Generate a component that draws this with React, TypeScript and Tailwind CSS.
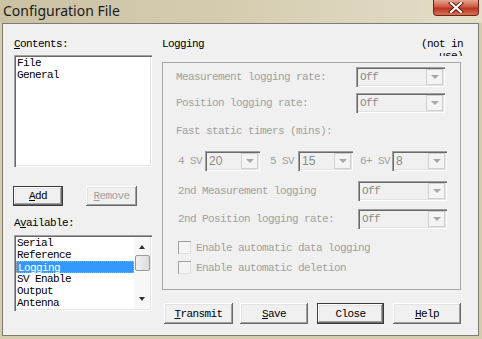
const mono =
  "font-['Liberation_Mono',monospace] text-[11px] leading-[12px] tracking-[-0.6px] whitespace-pre";

const sunken =
  "shadow-[inset_1px_1px_#a0a0a0,inset_2px_2px_#696969,inset_-1px_-1px_#ffffff,inset_-2px_-2px_#e3e3e3]";

const raised =
  "shadow-[inset_-1px_-1px_#696969,inset_1px_1px_#ffffff,inset_-2px_-2px_#a0a0a0,inset_2px_2px_#e3e3e3]";

function Btn({
  label,
  mn,
  w,
  def,
  disabled,
}: {
  label: string;
  mn?: number;
  w: string;
  def?: boolean;
  disabled?: boolean;
}) {
  const i = mn ?? -1;
  return (
    <div
      className={`${w} flex h-full items-center justify-center bg-[#f0f0f0] ${raised} ${
        def ? "border border-[#3c3c3c]" : ""
      } ${mono} ${disabled ? "text-[#a0a0a0]" : "text-black"}`}
    >
      {i >= 0 ? (
        <span>
          {label.slice(0, i)}
          <span className="underline underline-offset-[1px]">{label[i]}</span>
          {label.slice(i + 1)}
        </span>
      ) : (
        label
      )}
    </div>
  );
}

function Select({ value, w, sans }: { value: string; w: string; sans?: boolean }) {
  return (
    <div className={`${w} relative flex h-[20px] items-center bg-[#f0f0f0] pl-[4px] ${sunken}`}>
      <span
        className={
          sans
            ? "font-['Liberation_Sans',sans-serif] text-[12px] leading-[12px] text-[#8a8a8a]"
            : `${mono} text-[#8a8a8a]`
        }
      >
        {value}
      </span>
      <div className="ml-auto mr-[2px] flex h-[16px] w-[17px] items-center justify-center border border-[#d0d0d0] bg-[#f4f4f4]">
        <div className="h-0 w-0 border-x-[4px] border-t-[4px] border-x-transparent border-t-[#a8a8a8]" />
      </div>
    </div>
  );
}

function Check({ label }: { label: string }) {
  return (
    <div className="flex h-[13px] items-center pl-[15px]">
      <div className="h-[13px] w-[13px] bg-[#f4f4f4] shadow-[inset_1px_1px_#a0a0a0,inset_-1px_-1px_#e0e0e0]" />
      <span className={`${mono} ml-[5px] text-[#a0a0a0]`}>{label}</span>
    </div>
  );
}

function Row({ label, select }: { label: string; select: React.ReactNode }) {
  return (
    <div className="flex h-[20px] items-center">
      <span className={`${mono} w-[180px] text-[#a0a0a0]`}>{label}</span>
      {select}
    </div>
  );
}

export default function App() {
  const available = ["Serial", "Reference", "Logging", "SV Enable", "Output", "Antenna"];

  return (
    <div className="flex h-[339px] w-[482px] flex-col overflow-hidden bg-[#d5ccb0]">
      {/* Title bar */}
      <div className="flex h-[23px] shrink-0 items-start bg-[linear-gradient(90deg,#cbc2a4,#d6cdb1_50%,#e4dec9)]">
        <span className="ml-[3px] mt-[2px] font-['Noto_Sans',sans-serif] text-[14px] leading-[18px] text-[#1a1a1a]">
          Configuration File
        </span>
        <div className="ml-auto mr-[3px] flex h-[16px] w-[46px] items-center justify-center rounded-b-[4px] border border-t-0 border-[#6a2419] bg-[linear-gradient(#e6a590,#cf5a40_45%,#b9361f_55%,#d67456)]">
          <svg width="16" height="11" viewBox="0 0 16 11">
            <path
              d="M3 1 L13 10 M13 1 L3 10"
              stroke="#5a1a10"
              strokeWidth="4"
              strokeLinecap="square"
            />
            <path
              d="M3 1 L13 10 M13 1 L3 10"
              stroke="#ffffff"
              strokeWidth="2.2"
              strokeLinecap="square"
            />
          </svg>
        </div>
      </div>

      {/* Client area */}
      <div className="ml-[2px] flex h-[313px] w-[477px] border border-[#7d7b72] bg-[#f0f0f0]">
        {/* Left column */}
        <div className="ml-[11px] flex w-[139px] shrink-0 flex-col">
          <span className={`${mono} mt-[14px] h-[12px] text-black`}>
            <span className="underline underline-offset-[1px]">C</span>ontents:
          </span>
          <div className={`mt-[5px] h-[112px] w-[138px] bg-white pl-[3px] pt-[2px] ${sunken}`}>
            <div className={`${mono} text-black`}>File</div>
            <div className={`${mono} text-black`}>General</div>
          </div>
          <div className="-ml-px mt-[19px] flex h-[20px] gap-[23px]">
            <Btn label="Add" mn={0} w="w-[50px]" def />
            <Btn label="Remove" mn={0} w="w-[51px]" disabled />
          </div>
          <span className={`${mono} mt-[11px] h-[12px] text-black`}>
            A<span className="underline underline-offset-[1px]">v</span>ailable:
          </span>
          <div className={`mt-[6px] flex h-[76px] w-[138px] bg-white p-[2px] ${sunken}`}>
            <div className="flex-1 overflow-hidden">
              {available.map((a) => (
                <div
                  key={a}
                  className={`${mono} h-[12px] pl-[1px] ${
                    a === "Logging"
                      ? "border border-dotted border-[#f0a050] bg-[#3399ff] pl-0 leading-[10px] text-white"
                      : "text-black"
                  }`}
                >
                  {a}
                </div>
              ))}
            </div>
            <div className="flex w-[16px] flex-col items-center bg-[#f7f7f7]">
              <div className="mt-[8px] h-0 w-0 border-x-[3.5px] border-b-[4px] border-x-transparent border-b-[#333]" />
              <div className="mt-[6px] h-[16px] w-[15px] rounded-[2px] border border-[#9a9a9a] bg-[linear-gradient(90deg,#f2f2f2,#dcdcdc)]" />
              <div className="mt-auto mb-[8px] h-0 w-0 border-x-[3.5px] border-t-[4px] border-x-transparent border-t-[#333]" />
            </div>
          </div>
        </div>

        {/* Right column */}
        <div className="ml-[9px] flex w-[310px] shrink-0 flex-col">
          <div className="mt-[14px] flex h-[18px] items-start">
            <span className={`${mono} text-black`}>Logging</span>
            <div className="ml-[217px] h-[18px] w-[44px] shrink-0 overflow-hidden">
              <div className={`${mono} text-black`}>(not in</div>
              <div className={`${mono} text-black`}>{"   use)"}</div>
            </div>
          </div>

          <div className="mt-[6px] flex h-[228px] w-[299px] flex-col border border-[#a8a8a8]">
            <div className="ml-[13px] mt-[4px]">
              <Row label="Measurement logging rate:" select={<Select value="Off" w="w-[89px]" />} />
            </div>
            <div className="ml-[13px] mt-[6px]">
              <Row label="Position logging rate:" select={<Select value="Off" w="w-[89px]" />} />
            </div>
            <span className={`${mono} ml-[13px] mt-[12px] h-[12px] text-[#a0a0a0]`}>
              Fast static timers (mins):
            </span>
            <div className="ml-[15px] mt-[14px] flex h-[20px] items-center">
              <span className={`${mono} text-[#a0a0a0]`}>4 SV</span>
              <div className="ml-[3px]">
                <Select value="20" w="w-[55px]" sans />
              </div>
              <span className={`${mono} ml-[10px] text-[#a0a0a0]`}>5 SV</span>
              <div className="ml-[4px]">
                <Select value="15" w="w-[55px]" sans />
              </div>
              <span className={`${mono} ml-[7px] text-[#a0a0a0]`}>6+ SV</span>
              <div className="ml-[2px]">
                <Select value="8" w="w-[55px]" sans />
              </div>
            </div>
            <div className="ml-[15px] mt-[10px]">
              <Row label="2nd Measurement logging" select={<Select value="Off" w="w-[89px]" />} />
            </div>
            <div className="ml-[15px] mt-[8px]">
              <Row label="2nd Position logging rate:" select={<Select value="Off" w="w-[89px]" />} />
            </div>
            <div className="mt-[12px]">
              <Check label="Enable automatic data logging" />
            </div>
            <div className="mt-[7px]">
              <Check label="Enable automatic deletion" />
            </div>
          </div>

          <div className="ml-[2px] mt-[13px] flex h-[21px]">
            <Btn label="Transmit" mn={0} w="w-[69px]" />
            <div className="ml-[7px] h-full">
              <Btn label="Save" mn={0} w="w-[68px]" />
            </div>
            <div className="ml-[9px] h-full">
              <Btn label="Close" w="w-[67px]" def />
            </div>
            <div className="ml-[9px] h-full">
              <Btn label="Help" mn={0} w="w-[68px]" />
            </div>
          </div>
        </div>
      </div>
    </div>
  );
}
